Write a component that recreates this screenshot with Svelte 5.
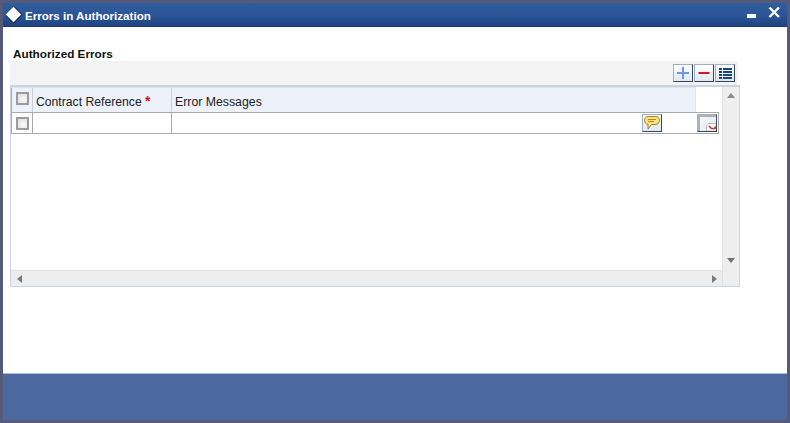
<script>
  let rows = [{ id: 1 }];
</script>

<div class="window">
  <header class="titlebar">
    <span class="diamond"></span>
    <h1>Errors in Authorization</h1>
    <div class="winbtns">
      <svg width="10" height="5" viewBox="0 0 10 5"><rect y="0" width="9" height="4" fill="#fff"/></svg>
      <svg width="13" height="13" viewBox="0 0 13 13"><path d="M1.5 1.5 L11 11 M11 1.5 L1.5 11" stroke="#fff" stroke-width="2.4" fill="none"/></svg>
    </div>
  </header>

  <main class="content">
    <h2>Authorized Errors</h2>
    <div class="toolbar">
      <button class="tool" aria-label="Add">
        <svg width="14" height="14" viewBox="0 0 14 14"><path d="M7 1V13M1 7H13" stroke="#6c9ade" stroke-width="2" fill="none"/></svg>
      </button>
      <button class="tool" aria-label="Remove">
        <svg width="14" height="14" viewBox="0 0 14 14"><rect x="1.5" y="6" width="11" height="2" fill="#d8141c"/></svg>
      </button>
      <button class="tool" aria-label="View">
        <svg width="15" height="13" viewBox="0 0 15 13"><path d="M1 1h3v2H1zM5 1h9v2H5zM1 4h3v2H1zM5 4h9v2H5zM1 7h3v2H1zM5 7h9v2H5zM1 10h3v2H1zM5 10h9v2H5z" fill="#17497f"/></svg>
      </button>
    </div>

    <div class="grid">
      <div class="grid-main">
        <div class="grid-body">
          <div class="head">
            <div class="cell check"><span class="checkbox"></span></div>
            <div class="cell ref">Contract Reference <b>*</b></div>
            <div class="cell msg">Error Messages</div>
          </div>
          {#each rows as row (row.id)}
            <div class="row">
              <div class="cell check"><span class="checkbox"></span></div>
              <div class="cell ref"></div>
              <div class="cell msg">
                <button class="tool small" aria-label="Message">
                  <svg width="18" height="16" viewBox="0 0 18 16"><path d="M5.500 1.500h7c2.300 0 4 1.500 4 3.800s-1.700 4.200-4 4.200H8.500L5 14v-4.600C2.800 9.100 1.500 7.400 1.500 5.300c0-2.300 1.700-3.800 4-3.800z" fill="#f8e27c" stroke="#a37f24"/><path d="M5 4.500h8M5 6.500h6" stroke="#b08a2a"/></svg>
                </button>
              </div>
              <div class="cell extra">
                <button class="tool detail" aria-label="Details">
                  <svg width="18" height="16" viewBox="0 0 18 16"><path d="M0 1h18M1 0v16" stroke="#aab1bb" stroke-width="2" fill="none"/><path d="M8.500 16v-5.500l2-2h7.500V16z" fill="#fff" stroke="#b4bac3"/><path d="M11 11l2.500 2.500h3.500v-2" stroke="#c0392b" stroke-width="1.600" fill="none"/></svg>
                </button>
              </div>
            </div>
          {/each}
        </div>
        <div class="hscroll">
          <span class="arrow left"></span>
          <span class="arrow right"></span>
        </div>
      </div>
      <div class="vscroll">
        <span class="arrow up"></span>
        <span class="arrow down"></span>
      </div>
    </div>
  </main>

  <footer class="footer"></footer>
</div>

<style>
  :global(body) {
    margin: 0;
    background: #555a7a;
  }

  .window {
    box-sizing: border-box;
    width: 790px;
    height: 423px;
    padding: 3px;
    display: flex;
    flex-direction: column;
    background: #555a7a;
    font-family: "Liberation Sans", Arial, sans-serif;
    color: #111;
  }

  .titlebar {
    height: 24px;
    flex-shrink: 0;
    display: flex;
    align-items: center;
    background: linear-gradient(#2f5c9c, #2b5596 55%, #1f437f);
    border-bottom: 1px solid #1b3a6e;
    box-sizing: border-box;
  }

  .diamond {
    width: 11px;
    height: 11px;
    margin-left: 5px;
    margin-right: 6px;
    background: #fff;
    transform: rotate(45deg);
    box-shadow: 1px -1px 0 #10305f, 1px 1px 0 #10305f;
  }

  h1 {
    margin: 0;
    padding-top: 2px;
    font-size: 11.6px;
    font-weight: bold;
    color: #fff;
    flex: 1;
  }

  .winbtns {
    display: flex;
    align-items: flex-start;
    gap: 11px;
    padding-right: 6px;
    height: 17px;
  }

  .winbtns svg:first-child {
    margin-top: 8px;
  }

  .content {
    flex: 1;
    background: #fff;
    padding: 20px 0 0 7px;
    border-bottom: 1px solid #a9bdd0;
  }

  h2 {
    margin: 0 0 0 3px;
    height: 14px;
    line-height: 14px;
    font-size: 11.75px;
    font-weight: bold;
    color: #111;
  }

  .toolbar {
    box-sizing: border-box;
    width: 728px;
    height: 24px;
    background: #f3f3f3;
    display: flex;
    justify-content: flex-end;
    align-items: center;
    gap: 1px;
    padding-right: 3px;
  }

  .tool {
    box-sizing: border-box;
    width: 20px;
    height: 18px;
    padding: 0;
    display: flex;
    align-items: center;
    justify-content: center;
    background: linear-gradient(#fff, #dfe7f1);
    border: 1px solid;
    border-color: #9cb0c4 #34455e #34455e #9cb0c4;
  }

  .grid {
    box-sizing: border-box;
    width: 730px;
    height: 202px;
    display: flex;
    border: 1px solid #ccd4e0;
    border-top-width: 2px;
    background: #fff;
  }

  .grid-main {
    flex: 1;
    display: flex;
    flex-direction: column;
  }

  .grid-body {
    flex: 1;
  }

  .head, .row {
    display: flex;
    width: 708px;
  }

  .head {
    height: 24px;
    background: #edf1fa;
    width: 684px;
    box-sizing: content-box;
    border-top: 1px solid #dde3ee;
    border-right: 1px solid #dde3ee;
  }

  .row {
    box-sizing: border-box;
    height: 22px;
    border-top: 1px solid #a9a9a9;
    border-bottom: 1px solid #a9a9a9;
  }

  .cell {
    box-sizing: border-box;
    display: flex;
    align-items: center;
    font-size: 12.3px;
    color: #222;
    border-right: 1px solid #a9a9a9;
  }

  .head .cell {
    border-right-color: #c8cfdc;
  }

  .check {
    width: 22px;
    justify-content: center;
    border-left: 1px solid #a9a9a9;
  }

  .ref {
    width: 139px;
    padding-left: 3px;
    padding-top: 4px;
    font-size: 12.2px;
    white-space: pre;
  }

  .ref b {
    color: #d8141c;
    font-size: 14px;
    margin-top: -3px;
  }

  .msg {
    flex: 1;
    padding-left: 3px;
    padding-top: 4px;
    justify-content: flex-start;
  }

  .head .msg {
    border-right: 0;
  }

  .row .msg {
    justify-content: flex-end;
    padding: 0 33px 0 0;
    width: 523px;
    flex: none;
    border-right: 0;
  }

  .row .extra {
    width: 24px;
    justify-content: center;
    border-right: 1px solid #a9a9a9;
  }

  .tool.small {
    margin-top: -1px;
  }

  .tool.detail {
    margin-top: -1px;
    background: linear-gradient(135deg, #f8f9fb, #e2e6ec);
    border-color: #a7b3c0 #3c4a5c #3c4a5c #a7b3c0;
  }

  .checkbox {
    box-sizing: border-box;
    width: 13px;
    height: 13px;
    background: radial-gradient(circle at 60% 60%, #fafafa, #dcdcdc);
    border: 2px solid #9c9c9c;
  }

  .head .checkbox {
    margin-top: -3px;
  }

  .hscroll {
    height: 15px;
    display: flex;
    align-items: center;
    justify-content: space-between;
    padding: 0 5px 0 6px;
    background: #ededed;
    border-top: 1px solid #dfe3e8;
  }

  .vscroll {
    box-sizing: border-box;
    width: 17px;
    display: flex;
    flex-direction: column;
    align-items: center;
    justify-content: space-between;
    padding: 6px 0 23px;
    background: #eeeeee;
    border-left: 1px solid #dfe3e8;
  }

  .arrow {
    width: 0;
    height: 0;
    border: 4px solid transparent;
  }

  .arrow.up {
    border-top: 0;
    border-bottom: 5px solid #8a8a8a;
  }

  .arrow.down {
    border-bottom: 0;
    border-top: 5px solid #707070;
  }

  .arrow.left {
    border-left: 0;
    border-right: 5px solid #7a7a7a;
  }

  .arrow.right {
    border-right: 0;
    border-left: 5px solid #7a7a7a;
  }

  .footer {
    height: 46px;
    flex-shrink: 0;
    background: #4b69a0;
  }
</style>
